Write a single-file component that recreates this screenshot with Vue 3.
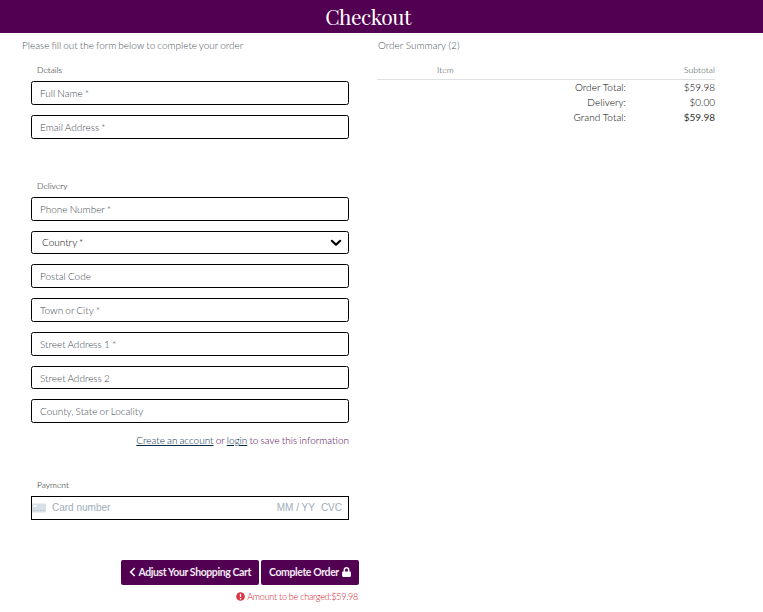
<script setup>
const details = ['Full Name *', 'Email Address *']
const delivery = [
  { label: 'Phone Number *' },
  { label: 'Country *', select: true },
  { label: 'Postal Code' },
  { label: 'Town or City *' },
  { label: 'Street Address 1 *' },
  { label: 'Street Address 2', compact: true },
  { label: 'County, State or Locality' },
]
const totals = [
  { label: 'Order Total:', value: '$59.98' },
  { label: 'Delivery:', value: '$0.00' },
  { label: 'Grand Total:', value: '$59.98', strong: true },
]
</script>

<template>
  <div class="page">
    <header class="banner"><h1>Checkout</h1></header>
    <main class="columns">
      <form class="checkout" @submit.prevent>
        <p class="intro">Please fill out the form below to complete your order</p>
        <section class="group details">
          <h2>Details</h2>
          <div v-for="d in details" :key="d" class="field"><span>{{ d }}</span></div>
        </section>
        <section class="group delivery">
          <h2>Delivery</h2>
          <div v-for="d in delivery" :key="d.label" class="field" :class="{ select: d.select, compact: d.compact }">
            <span>{{ d.label }}</span>
            <svg v-if="d.select" class="chevron" viewBox="0 0 12 8"><path d="M1.800 1.800 6 5.800l4.200-4" /></svg>
          </div>
          <p class="account"><a>Create an account</a> or <a>login</a> to save this information</p>
        </section>
        <section class="group payment">
          <h2>Payment</h2>
          <div class="card">
            <svg class="card-icon" viewBox="0 0 14 10">
              <rect y=".5" width="14" height="9" rx="1" fill="#d9dfe7" />
              <rect x="1.500" y="2" width="3" height="2" fill="#f8fafc" />
              <path d="M1.500 7.500h11" stroke="#bcc6d2" stroke-dasharray="2 1" />
            </svg>
            <span class="number">Card number</span>
            <span class="expiry">MM / YY</span>
            <span class="cvc">CVC</span>
          </div>
        </section>
        <div class="actions">
          <button class="back">
            <svg viewBox="0 0 7 10" class="arrow"><path d="M5.700 1 1.700 5l4 4" /></svg>
            <span>Adjust Your Shopping Cart</span>
          </button>
          <button class="complete">
            <span>Complete Order</span>
            <svg viewBox="0 0 448 512" class="lock"><path d="M400 224h-24v-72C376 68.200 307.800 0 224 0S72 68.200 72 152v72H48c-26.500 0-48 21.500-48 48v192c0 26.500 21.500 48 48 48h352c26.500 0 48-21.500 48-48V272c0-26.500-21.500-48-48-48zm-104 0H152v-72c0-39.700 32.300-72 72-72s72 32.300 72 72v72z" /></svg>
          </button>
        </div>
        <p class="charge">
          <svg viewBox="0 0 10 10"><circle cx="5" cy="5" r="4.800" fill="#dc3545" /><path d="M5 2v3.600M5 6.800v1.400" stroke="#fff" stroke-width="1.400" /></svg>
          <span>Amount to be charged:$59.98</span>
        </p>
      </form>
      <aside class="summary">
        <p class="intro count">Order Summary (2)</p>
        <div class="head"><span class="item">Item</span><span class="subtotal">Subtotal</span></div>
        <div v-for="t in totals" :key="t.label" class="row">
          <span class="label">{{ t.label }}</span>
          <span class="value" :class="{ strong: t.strong }">{{ t.value }}</span>
        </div>
      </aside>
    </main>
  </div>
</template>

<style>
body { margin: 0; background: #fff; }
</style>

<style scoped>
.page { height: 612px; overflow: hidden; font: 300 10px/15px Lato, "Liberation Sans", sans-serif; color: #000; white-space: nowrap; }
h1, h2, p { margin: 0; font-weight: inherit; }
.banner { height: 33px; box-sizing: border-box; background: #520052; color: #fff; padding-right: 27px; text-align: center; }
h1 { font: 400 21px/33px "Playfair Display", "Liberation Serif", serif; letter-spacing: -.5px; }
.columns { display: grid; grid-template-columns: 337px 338px; column-gap: 19px; padding: 5px 0 0 21px; }
.intro { font-size: 10px; line-height: 15px; color: #4c555e; }
.checkout .intro { word-spacing: -.7px; padding-left: 1px; }
.count { padding-left: 1px; }
.group { padding: 0 9px 0 10px; }
h2 { font-size: 8.500px; line-height: 12px; padding-left: 6px; margin-bottom: 5px; }
.details { padding-top: 11px; height: 105px; }
.delivery { padding-top: 11px; height: 287.500px; }
.field { height: 24px; box-sizing: border-box; border: 1px solid #000; border-radius: 2.500px; margin-bottom: 10px; padding: 1px 6px 0 8px; display: flex; align-items: center; justify-content: space-between; color: #434b53; word-spacing: -.6px; }
.select { height: 23px; color: #000; padding: 0 6px 0 10px; }
.compact { height: 23px; }
.chevron { width: 12px; height: 8px; fill: none; stroke: #000; stroke-width: 2.200; stroke-linecap: round; stroke-linejoin: round; }
.account { text-align: right; color: #520052; word-spacing: -.6px; }
.account a { color: #062c4a; text-decoration: underline; }
.payment { padding-top: 11px; }
.card { height: 24px; box-sizing: border-box; border: 1px solid #000; display: flex; align-items: center; padding-right: 6px; font: 400 10px/15px "Liberation Sans", Arial, sans-serif; color: #9eadbc; }
.card-icon { width: 14px; height: 10px; }
.number { margin-left: 6px; margin-right: auto; }
.expiry { margin-right: 6px; }
.actions { display: flex; justify-content: flex-end; gap: 2px; margin: 40px -1px 0 0; }
button { height: 25px; box-sizing: border-box; padding: 0 8px; margin: 0; border: 0; border-radius: 2px; background: #520052; color: #f3eaf3; font: 700 10.500px/15px Lato, sans-serif; letter-spacing: -.4px; display: flex; align-items: center; justify-content: space-between; }
.back { width: 138px; }
.complete { width: 98px; }
.arrow { width: 7px; height: 10px; fill: none; stroke: #fff; stroke-width: 1.600; }
.lock { width: 9px; height: 10px; fill: #fff; }
.charge { display: flex; justify-content: flex-end; align-items: center; gap: 2px; margin: 4px 0 0; font-size: 9px; letter-spacing: -.24px; color: #d3162a; }
.charge svg { width: 9px; height: 9px; }
.head { display: flex; align-items: center; justify-content: space-between; height: 20px; box-sizing: border-box; margin-top: 7px; border-bottom: 1px solid #dee2e6; font-size: 8.500px; letter-spacing: .1px; padding: 1px 0 0 60px; color: #343a40; }
.row { display: grid; grid-template-columns: 249px 1fr; text-align: right; height: 15px; }
.label { letter-spacing: .05px; }
.strong { font-weight: 400; color: #333; }
</style>
